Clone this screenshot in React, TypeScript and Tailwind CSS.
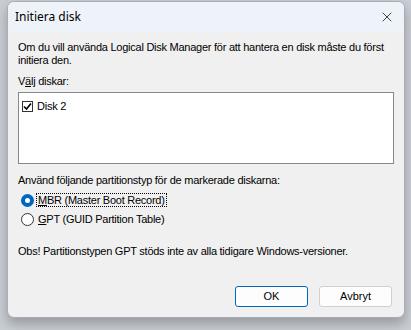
import { X } from "lucide-react";

const body = "font-['Liberation_Sans',Arial,sans-serif] text-[11px] tracking-[-0.25px] text-black";

export default function App() {
  return (
    <div className="w-[411px] h-[330px] bg-[#c9ced4] overflow-hidden pt-px pl-[7px] pr-[6px]">
      <div className="flex flex-col w-[398px] h-[317px] bg-[#f0f0f0] rounded-[7px] border border-[#a9adb3] overflow-hidden shadow-[0_6px_12px_rgba(0,0,0,0.25)]">
        {/* title bar */}
        <div className="flex items-center h-[30px] bg-[#eef3f9] pl-[7px] pr-[9px]">
          <span className="font-['Noto_Sans',sans-serif] text-[12px] text-black flex-1">Initiera disk</span>
          <X size={16} strokeWidth={1.1} className="text-black" />
        </div>

        <div className={`flex flex-col flex-1 px-[10px] pt-[9px] ${body}`}>
          <p className="leading-[13px]">
            Om du vill använda Logical Disk Manager för att hantera en disk måste du först initiera den.
          </p>
          <p className="mt-[8px] leading-[13px]">
            V<span className="underline">ä</span>lj diskar:
          </p>
          <div className="mt-[4px] h-[72px] bg-white border border-[#828790] pl-[3px] pt-[5px]">
            <div className="flex items-center gap-[4px]">
              <span className="w-[11px] h-[11px] border border-[#333] bg-white flex items-center justify-center">
                <svg width="9" height="9" viewBox="0 0 9 9">
                  <path d="M1 4.5 L3.5 7 L8 1.5" fill="none" stroke="#000" strokeWidth="1.6" />
                </svg>
              </span>
              <span>Disk 2</span>
            </div>
          </div>

          <p className="mt-[10px] leading-[13px]">Använd följande partitionstyp för de markerade diskarna:</p>
          <div className="mt-[6px] flex flex-col gap-[5px] pl-[3px]">
            <div className="flex items-center gap-[2px]">
              <span className="w-[13px] h-[13px] rounded-full border-[4px] border-[#0067c0] bg-white" />
              <span className="px-px border border-dotted border-black leading-[12px]">
                <span className="underline">M</span>BR (Master Boot Record)
              </span>
            </div>
            <div className="flex items-center gap-[2px]">
              <span className="w-[13px] h-[13px] rounded-full border border-[#333] bg-white" />
              <span className="px-px border border-transparent leading-[12px]">
                <span className="underline">G</span>PT (GUID Partition Table)
              </span>
            </div>
          </div>

          <p className="mt-[19px] leading-[13px]">Obs! Partitionstypen GPT stöds inte av alla tidigare Windows-versioner.</p>

          <div className="mt-auto mb-[10px] flex justify-end gap-[11px] pr-[2px] tracking-normal">
            <button className="w-[73px] h-[21px] bg-[#fdfdfd] border border-[#0067c0] rounded-[3px]">OK</button>
            <button className="w-[73px] h-[21px] bg-[#fdfdfd] border border-[#d0d0d0] rounded-[3px]">Avbryt</button>
          </div>
        </div>
      </div>
    </div>
  );
}
